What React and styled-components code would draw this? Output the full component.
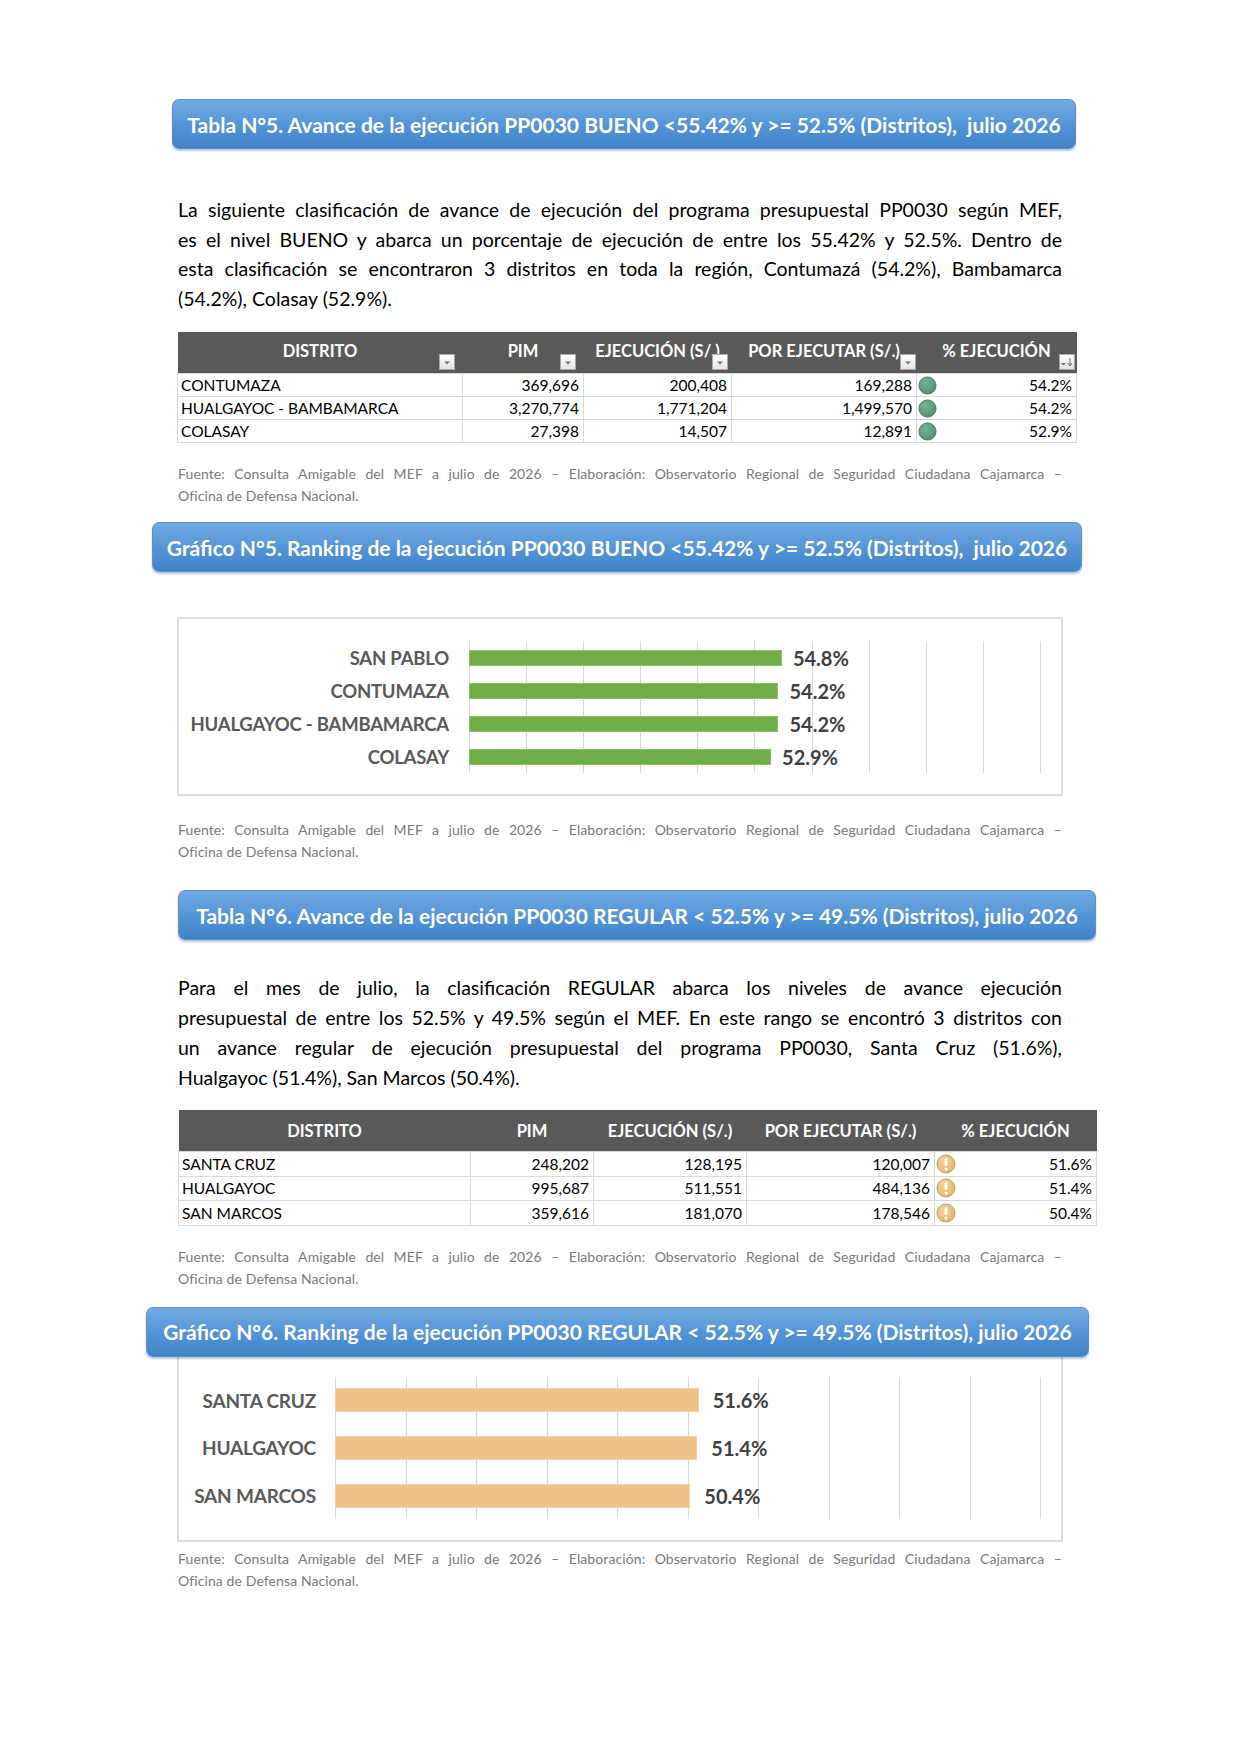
import React from 'react';
import styled, { createGlobalStyle } from 'styled-components';

const GlobalStyle = createGlobalStyle`
  html, body {
    margin: 0;
    padding: 0;
    background: #fff;
  }
  body {
    font-family: "Lato", "Open Sans", sans-serif;
    color: #000;
  }
`;

const Page = styled.div`
  width: 1240px;
  min-height: 1754px;
  padding-top: 99px;
  box-sizing: border-box;
  display: flex;
  flex-direction: column;
`;

const TitleBar = styled.div`
  margin-left: ${(p) => p.$left}px;
  margin-top: ${(p) => p.$mt || 0}px;
  width: ${(p) => p.$width}px;
  height: 50px;
  box-sizing: border-box;
  position: relative;
  z-index: 1;
  display: flex;
  align-items: center;
  justify-content: center;
  border-radius: 7px;
  border: 1px solid #5a93cf;
  background: linear-gradient(180deg, #75aae2 0%, #5897d8 45%, #3f83c8 100%);
  box-shadow: 0 2px 2px rgba(60, 90, 130, 0.35);
  color: #fff;
  font-size: 21px;
  font-weight: 700;
  white-space: nowrap;
`;

const Text = styled.div`
  margin-left: 178px;
  margin-top: ${(p) => p.$mt}px;
  width: 884px;
  font-size: ${(p) => p.$size}px;
  line-height: ${(p) => p.$lh}px;
  color: ${(p) => p.$color || '#000'};
  letter-spacing: ${(p) => p.$ls || 0}px;
`;

const Line = styled.span`
  display: block;
  text-align: justify;
  text-align-last: ${(p) => (p.$last ? 'left' : 'justify')};
`;

const Table = styled.table`
  margin-left: ${(p) => p.$left}px;
  margin-top: ${(p) => p.$mt}px;
  width: ${(p) => p.$width}px;
  border-collapse: collapse;
  table-layout: fixed;
  font-size: 15.5px;
`;

const Th = styled.th`
  position: relative;
  height: ${(p) => (p.$filters ? 38 : 41)}px;
  padding: 0 0 ${(p) => (p.$filters ? 3 : 0)}px;
  background: #595959;
  color: #fff;
  font-size: 16.5px;
  font-weight: 700;
  text-align: center;
  white-space: nowrap;
  border: none;
`;

const Td = styled.td`
  height: ${(p) => p.$h}px;
  padding: 0 4px 0 3px;
  border: 1px solid #d9d9d9;
  text-align: ${(p) => p.$align || 'left'};
  white-space: nowrap;
`;

const PctCell = styled.div`
  display: flex;
  align-items: center;
  justify-content: space-between;
  margin-left: -2px;
`;

const FilterBtn = styled.span`
  position: absolute;
  right: ${(p) => p.$right}px;
  bottom: 3px;
  width: 16px;
  height: 16px;
  box-sizing: border-box;
  border: 1px solid #a9a9a9;
  background: linear-gradient(180deg, #ffffff 0%, #e2e2e2 100%);
  display: flex;
  align-items: flex-end;
  justify-content: center;
`;

const ChartBox = styled.div`
  margin-left: 177px;
  margin-top: ${(p) => p.$mt}px;
  width: 886px;
  box-sizing: border-box;
  border: 2px solid #dedede;
  ${(p) => p.$openTop && 'border-top: none;'}
  padding: ${(p) => p.$pt}px 20px ${(p) => p.$pb}px 0;
  display: grid;
  grid-template-columns: ${(p) => p.$labelW}px ${(p) => p.$plotW + 1}px;
  column-gap: ${(p) => p.$gap}px;
`;

const Labels = styled.div`
  display: flex;
  flex-direction: column;
`;

const CatLabel = styled.div`
  height: ${(p) => p.$band}px;
  display: flex;
  align-items: center;
  justify-content: flex-end;
  font-size: ${(p) => p.$size}px;
  font-weight: 700;
  color: #595959;
  white-space: nowrap;
  letter-spacing: -0.2px;
`;

const Plot = styled.div`
  display: flex;
  flex-direction: column;
  background-image: repeating-linear-gradient(
    to right,
    #d9d9d9 0,
    #d9d9d9 1px,
    transparent 1px,
    transparent ${(p) => p.$step}px
  );
`;

const BarRow = styled.div`
  height: ${(p) => p.$band}px;
  display: flex;
  align-items: center;
`;

const Bar = styled.div`
  height: ${(p) => p.$h}px;
  background: ${(p) => p.$color};
  box-shadow: inset 0 0 0 1px ${(p) => p.$edge};
`;

const Value = styled.span`
  margin-left: ${(p) => p.$gap}px;
  font-size: 20px;
  font-weight: 700;
  color: #404040;
`;

const Caret = () => (
  <svg width="8" height="6" viewBox="0 0 8 6" style={{ marginBottom: 3 }}>
    <path d="M1 1.5 L7 1.5 L4 4.5 Z" fill="#707070" />
  </svg>
);

const SortCaret = () => (
  <svg width="14" height="12" viewBox="0 0 14 12" style={{ marginBottom: 1 }}>
    <path d="M1 7 L6 7 L3.5 9.5 Z" fill="#707070" />
    <path d="M10 2 L10 9" stroke="#707070" strokeWidth="1" />
    <path d="M8 7 L10 10 L12 7" stroke="#707070" strokeWidth="1" fill="none" />
  </svg>
);

const GoodIcon = () => (
  <svg width="19" height="19" viewBox="0 0 20 20">
    <defs>
      <radialGradient id="g-good" cx="40%" cy="35%" r="70%">
        <stop offset="0%" stopColor="#79b298" />
        <stop offset="100%" stopColor="#4f8f73" />
      </radialGradient>
    </defs>
    <circle cx="10" cy="10" r="9" fill="url(#g-good)" stroke="#3f7a60" strokeWidth="1" />
  </svg>
);

const WarnIcon = () => (
  <svg width="20" height="20" viewBox="0 0 20 20">
    <defs>
      <radialGradient id="g-warn" cx="40%" cy="35%" r="70%">
        <stop offset="0%" stopColor="#f6d49e" />
        <stop offset="100%" stopColor="#e2b36c" />
      </radialGradient>
    </defs>
    <circle cx="10" cy="10" r="9" fill="url(#g-warn)" stroke="#c39a55" strokeWidth="1" />
    <rect x="8.6" y="4" width="2.8" height="8" rx="1.3" fill="#fff" />
    <circle cx="10" cy="15" r="1.5" fill="#fff" />
  </svg>
);

const SOURCE = [
  'Fuente: Consulta Amigable del MEF a julio de 2026 – Elaboración: Observatorio Regional de Seguridad Ciudadana Cajamarca –',
  'Oficina de Defensa Nacional.',
];

const Source = ({ mt }) => (
  <Text $mt={mt} $size={14} $lh={22} $color="#7a7a7a" $ls={0.1}>
    {SOURCE.map((l, i) => (
      <Line key={i} $last={i === SOURCE.length - 1}>{l}</Line>
    ))}
  </Text>
);

const Paragraph = ({ mt, lh, lines }) => (
  <Text $mt={mt} $size={19.5} $lh={lh}>
    {lines.map((l, i) => (
      <Line key={i} $last={i === lines.length - 1}>{l}</Line>
    ))}
  </Text>
);

const DataTable = ({ left, width, mt, cols, filters, rows, rowH, icon: Icon }) => (
  <Table $left={left} $width={width} $mt={mt}>
    <colgroup>
      {cols.map((c) => (
        <col key={c.title} style={{ width: c.w }} />
      ))}
    </colgroup>
    <thead>
      <tr>
        {cols.map((c, i) => (
          <Th key={c.title} $filters={filters}>
            {c.title}
            {filters && (
              <FilterBtn $right={c.btn}>
                {i === cols.length - 1 ? <SortCaret /> : <Caret />}
              </FilterBtn>
            )}
          </Th>
        ))}
      </tr>
    </thead>
    <tbody>
      {rows.map((r) => (
        <tr key={r[0]}>
          <Td $h={rowH}>{r[0]}</Td>
          <Td $h={rowH} $align="right">{r[1]}</Td>
          <Td $h={rowH} $align="right">{r[2]}</Td>
          <Td $h={rowH} $align="right">{r[3]}</Td>
          <Td $h={rowH}>
            <PctCell>
              <Icon />
              <span>{r[4]}</span>
            </PctCell>
          </Td>
        </tr>
      ))}
    </tbody>
  </Table>
);

const RankChart = ({ mt, openTop, pt, pb, labelW, gap, plotW, band, barH, labelSize, valueGap, color, edge, data }) => (
  <ChartBox
    $mt={mt}
    $openTop={openTop}
    $pt={pt}
    $pb={pb}
    $labelW={labelW}
    $gap={gap}
    $plotW={plotW}
  >
    <Labels>
      {data.map((d) => (
        <CatLabel key={d.name} $band={band} $size={labelSize}>
          {d.name}
        </CatLabel>
      ))}
    </Labels>
    <Plot $step={plotW / 10}>
      {data.map((d) => (
        <BarRow key={d.name} $band={band}>
          <Bar $h={barH} $color={color} $edge={edge} style={{ width: (d.value / 100) * plotW }} />
          <Value $gap={valueGap}>{d.value.toFixed(1)}%</Value>
        </BarRow>
      ))}
    </Plot>
  </ChartBox>
);

const table1Cols = [
  { title: 'DISTRITO', w: 285, btn: 8 },
  { title: 'PIM', w: 121, btn: 8 },
  { title: 'EJECUCIÓN (S/.)', w: 148, btn: 4 },
  { title: 'POR EJECUTAR (S/.)', w: 185, btn: 1 },
  { title: '% EJECUCIÓN', w: 160, btn: 2 },
];

const table2Cols = [
  { title: 'DISTRITO', w: 292 },
  { title: 'PIM', w: 123 },
  { title: 'EJECUCIÓN (S/.)', w: 153 },
  { title: 'POR EJECUTAR (S/.)', w: 188 },
  { title: '% EJECUCIÓN', w: 162 },
];

const table1Rows = [
  ['CONTUMAZA', '369,696', '200,408', '169,288', '54.2%'],
  ['HUALGAYOC - BAMBAMARCA', '3,270,774', '1,771,204', '1,499,570', '54.2%'],
  ['COLASAY', '27,398', '14,507', '12,891', '52.9%'],
];

const table2Rows = [
  ['SANTA CRUZ', '248,202', '128,195', '120,007', '51.6%'],
  ['HUALGAYOC', '995,687', '511,551', '484,136', '51.4%'],
  ['SAN MARCOS', '359,616', '181,070', '178,546', '50.4%'],
];

const chart1 = [
  { name: 'SAN PABLO', value: 54.8 },
  { name: 'CONTUMAZA', value: 54.2 },
  { name: 'HUALGAYOC - BAMBAMARCA', value: 54.2 },
  { name: 'COLASAY', value: 52.9 },
];

const chart2 = [
  { name: 'SANTA CRUZ', value: 51.6 },
  { name: 'HUALGAYOC', value: 51.4 },
  { name: 'SAN MARCOS', value: 50.4 },
];

export default function App() {
  return (
    <>
      <GlobalStyle />
      <Page>
        <TitleBar $left={172} $width={904}>
          Tabla N°5. Avance de la ejecución PP0030 BUENO &lt;55.42% y &gt;= 52.5% (Distritos),&nbsp; julio 2026
        </TitleBar>

        <Paragraph
          mt={46}
          lh={29.5}
          lines={[
            'La siguiente clasificación de avance de ejecución del programa presupuestal  PP0030 según MEF,',
            'es el nivel BUENO y abarca un porcentaje de ejecución de entre los 55.42% y 52.5%. Dentro de',
            'esta clasificación se encontraron 3 distritos en toda la región, Contumazá (54.2%), Bambamarca',
            '(54.2%), Colasay (52.9%).',
          ]}
        />

        <DataTable
          left={177}
          width={899}
          mt={19}
          cols={table1Cols}
          filters
          rowH={22}
          rows={table1Rows}
          icon={GoodIcon}
        />

        <Source mt={20} />

        <TitleBar $left={152} $width={930} $mt={15}>
          Gráfico N°5. Ranking de la ejecución PP0030 BUENO &lt;55.42% y &gt;= 52.5% (Distritos),&nbsp; julio 2026
        </TitleBar>

        <RankChart
          mt={45}
          pt={22}
          pb={21}
          labelW={270}
          gap={20}
          plotW={571}
          band={33}
          barH={16}
          labelSize={18.5}
          valueGap={11}
          color="#70ad47"
          edge="#8cc26a"
          data={chart1}
        />

        <Source mt={23} />

        <TitleBar $left={178} $width={918} $mt={27}>
          Tabla N°6. Avance de la ejecución PP0030 REGULAR &lt; 52.5% y &gt;= 49.5% (Distritos), julio 2026
        </TitleBar>

        <Paragraph
          mt={33}
          lh={30}
          lines={[
            'Para el mes de julio, la clasificación REGULAR abarca los niveles de avance ejecución',
            'presupuestal de entre los 52.5% y 49.5% según el MEF. En este rango se encontró 3 distritos con',
            'un avance regular de ejecución presupuestal del programa PP0030, Santa Cruz (51.6%),',
            'Hualgayoc (51.4%), San Marcos (50.4%).',
          ]}
        />

        <DataTable
          left={178}
          width={918}
          mt={17}
          cols={table2Cols}
          rowH={23.5}
          rows={table2Rows}
          icon={WarnIcon}
        />

        <Source mt={20} />

        <TitleBar $left={146} $width={943} $mt={17}>
          Gráfico N°6. Ranking de la ejecución PP0030 REGULAR &lt; 52.5% y &gt;= 49.5% (Distritos), julio 2026
        </TitleBar>

        <RankChart
          mt={0}
          openTop
          pt={20}
          pb={21}
          labelW={137}
          gap={19}
          plotW={705}
          band={143 / 3}
          barH={24}
          labelSize={19}
          valueGap={14}
          color="#f0c28a"
          edge="#f4d2a8"
          data={chart2}
        />

        <Source mt={6} />
      </Page>
    </>
  );
}
